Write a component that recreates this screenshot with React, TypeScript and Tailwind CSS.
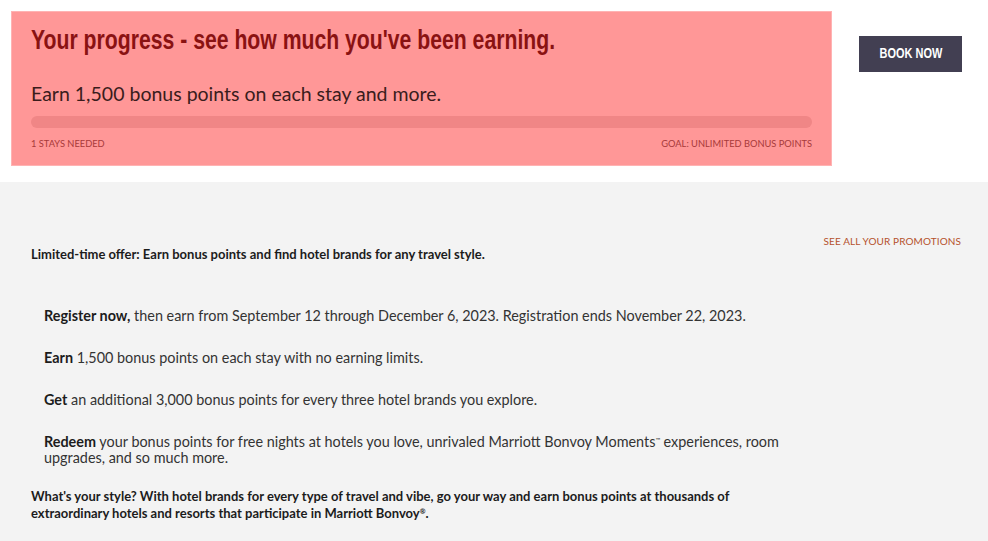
import React from 'react';

const cond = { fontFamily: '"Liberation Sans", Arial, sans-serif' };

const offers = [
  { lead: 'Register now,', rest: ' then earn from September 12 through December 6, 2023. Registration ends November 22, 2023.' },
  { lead: 'Earn', rest: ' 1,500 bonus points on each stay with no earning limits.' },
  { lead: 'Get', rest: ' an additional 3,000 bonus points for every three hotel brands you explore.' },
];

const App: React.FC = () => {
  return (
    <div className="min-h-[541px] bg-white text-[#1c1c1c] font-['Lato',sans-serif]">
      {/* Progress banner */}
      <div className="flex items-start pt-[11px] pl-[11px] pb-[16px]">
        <div className="w-[821px] h-[155px] bg-[#ff9797] border border-[#ffb3b3] px-[19px] pt-[12px]">
          <h1
            style={cond}
            className="inline-block origin-left scale-x-[0.785] whitespace-nowrap text-[27px] font-bold text-[#8a1212] leading-[32px]"
          >
            Your progress - see how much you've been earning.
          </h1>
          <p className="mt-[26px] text-[19.5px] text-[#3a1c1c] leading-[24px]">
            Earn 1,500 bonus points on each stay and more.
          </p>
          <div className="mt-[10px] h-[12px] w-full rounded-full bg-[#f08686]" />
          <div className="mt-[9px] flex justify-between text-[9.3px] text-[#a73a3a] uppercase">
            <span>1 stays needed</span>
            <span>Goal: unlimited bonus points</span>
          </div>
        </div>
        <button className="ml-[27px] mt-[25px] w-[103px] h-[36px] bg-[#423f52] text-white flex items-center justify-center pb-[3px]">
          <span style={cond} className="inline-block scale-x-[0.73] text-[15px] font-bold leading-none">
            BOOK NOW
          </span>
        </button>
      </div>

      {/* Promotion details */}
      <div className="bg-[#f3f3f3] pl-[31px] pr-[27px] pt-[52px] pb-[20px]">
        <div className="flex justify-between items-start">
          <p className="mt-[12px] text-[13px] font-bold leading-[16px]">
            Limited-time offer: Earn bonus points and find hotel brands for any travel style.
          </p>
          <a className="text-[10px] text-[#b5512c] tracking-[0.1px] leading-[14px]">SEE ALL YOUR PROMOTIONS</a>
        </div>

        <div className="pl-[13px] pt-[46px] text-[14.4px] leading-[16px] text-[#333]">
          {offers.map((o) => (
            <p key={o.lead} className="mb-[26px]">
              <span className="font-bold text-[#1c1c1c]">{o.lead}</span>
              {o.rest}
            </p>
          ))}
          <p className="w-[760px]">
            <span className="font-bold text-[#1c1c1c]">Redeem</span> your bonus points for free nights at hotels you love, unrivaled
            Marriott Bonvoy Moments<span className="align-[5px] text-[6px] leading-none">™</span> experiences, room upgrades, and so
            much more.
          </p>
        </div>

        <p className="mt-[22px] w-[715px] text-[13px] font-bold leading-[17px]">
          What's your style? With hotel brands for every type of travel and vibe, go your way and earn bonus points at
          thousands of extraordinary hotels and resorts that participate in Marriott Bonvoy
          <span className="align-[4px] text-[7px] leading-none">®</span>.
        </p>
      </div>
    </div>
  );
};

export default App;
